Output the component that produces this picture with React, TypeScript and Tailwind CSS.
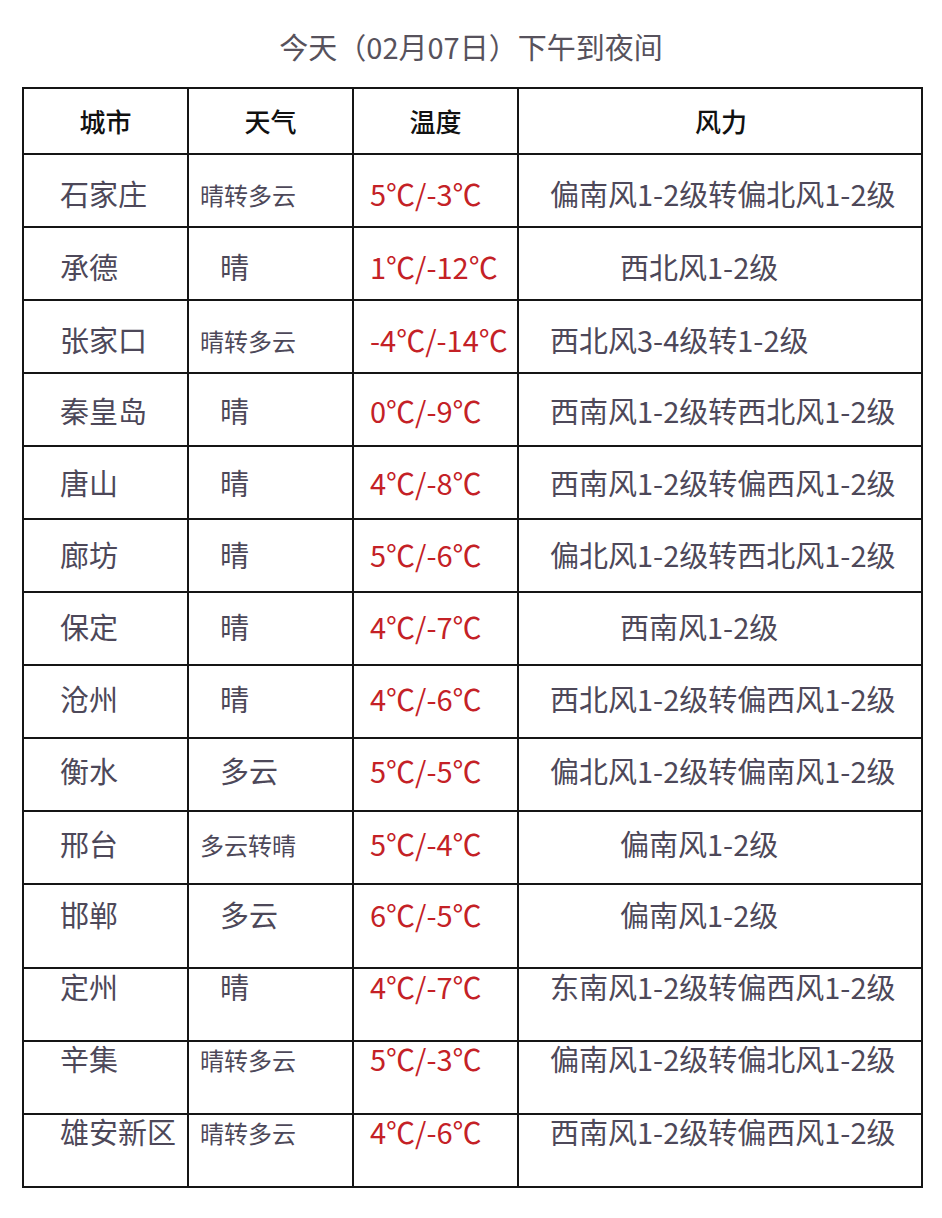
const cjk = '[font-family:"Noto_Sans_CJK_SC","Noto_Sans",sans-serif]'

type Row = {
  city: string
  weather: string
  temp: string
  wind: string
  h: string
  pt: string
}

const rows: Row[] = [
  { city: '石家庄', weather: '晴转多云', temp: '5℃/-3℃', wind: '偏南风1-2级转偏北风1-2级', h: 'h-[73px]', pt: 'pt-[24px]' },
  { city: '承德', weather: '晴', temp: '1℃/-12℃', wind: '西北风1-2级', h: 'h-[73px]', pt: 'pt-[24px]' },
  { city: '张家口', weather: '晴转多云', temp: '-4℃/-14℃', wind: '西北风3-4级转1-2级', h: 'h-[73px]', pt: 'pt-[24px]' },
  { city: '秦皇岛', weather: '晴', temp: '0℃/-9℃', wind: '西南风1-2级转西北风1-2级', h: 'h-[73px]', pt: 'pt-[22px]' },
  { city: '唐山', weather: '晴', temp: '4℃/-8℃', wind: '西南风1-2级转偏西风1-2级', h: 'h-[73px]', pt: 'pt-[21px]' },
  { city: '廊坊', weather: '晴', temp: '5℃/-6℃', wind: '偏北风1-2级转西北风1-2级', h: 'h-[73px]', pt: 'pt-[20px]' },
  { city: '保定', weather: '晴', temp: '4℃/-7℃', wind: '西南风1-2级', h: 'h-[73px]', pt: 'pt-[19px]' },
  { city: '沧州', weather: '晴', temp: '4℃/-6℃', wind: '西北风1-2级转偏西风1-2级', h: 'h-[73px]', pt: 'pt-[18px]' },
  { city: '衡水', weather: '多云', temp: '5℃/-5℃', wind: '偏北风1-2级转偏南风1-2级', h: 'h-[73px]', pt: 'pt-[17px]' },
  { city: '邢台', weather: '多云转晴', temp: '5℃/-4℃', wind: '偏南风1-2级', h: 'h-[73px]', pt: 'pt-[17px]' },
  { city: '邯郸', weather: '多云', temp: '6℃/-5℃', wind: '偏南风1-2级', h: 'h-[84px]', pt: 'pt-[15px]' },
  { city: '定州', weather: '晴', temp: '4℃/-7℃', wind: '东南风1-2级转偏西风1-2级', h: 'h-[73px]', pt: 'pt-[3px]' },
  { city: '辛集', weather: '晴转多云', temp: '5℃/-3℃', wind: '偏南风1-2级转偏北风1-2级', h: 'h-[73px]', pt: 'pt-[2px]' },
  { city: '雄安新区', weather: '晴转多云', temp: '4℃/-6℃', wind: '西南风1-2级转偏西风1-2级', h: 'h-[73px]', pt: 'pt-[2px]' },
]

// short entries sit further right, as in the source sheet
function WeatherCell({ text }: { text: string }) {
  const long = text.length > 2
  return (
    <div className={`${long ? 'pt-[4px] pl-[11px] text-[24px]' : 'pl-[31px] text-[29px]'} leading-none`}>
      {text}
    </div>
  )
}

export default function App() {
  return (
    <div className={`w-[942px] h-[1218px] bg-white ${cjk}`}>
      <h1 className="pt-[32px] h-[87px] text-center text-[29px] leading-none text-[#57525c] font-normal">
        今天（02月07日）下午到夜间
      </h1>

      <div className="ml-[22px] w-[901px] border-b-2 border-r-2 border-[#151515]">
        <div className="grid grid-cols-[165px_165px_165px_406px] h-[66px] text-[26px] font-medium text-[#111]">
          {['城市', '天气', '温度', '风力'].map((t) => (
            <div
              key={t}
              className="border-t-2 border-l-2 border-[#151515] flex items-center justify-center leading-none"
            >
              {t}
            </div>
          ))}
        </div>

        {rows.map((r) => (
          <div
            key={r.city}
            className={`grid grid-cols-[165px_165px_165px_406px] ${r.h} text-[#4d4859]`}
          >
            <div className={`border-t-2 border-l-2 border-[#151515] ${r.pt} pl-[36px] text-[29px] leading-none whitespace-nowrap`}>
              {r.city}
            </div>
            <div className={`border-t-2 border-l-2 border-[#151515] ${r.pt}`}>
              <WeatherCell text={r.weather} />
            </div>
            <div className={`border-t-2 border-l-2 border-[#151515] ${r.pt} pl-[16px] text-[29px] leading-none text-[#c42126] whitespace-nowrap`}>
              {r.temp}
            </div>
            <div
              className={`border-t-2 border-l-2 border-[#151515] ${r.pt} ${
                r.wind.length > 8 ? 'pl-[31px]' : 'pl-[101px]'
              } text-[29px] leading-none whitespace-nowrap`}
            >
              {r.wind}
            </div>
          </div>
        ))}
      </div>
    </div>
  )
}
